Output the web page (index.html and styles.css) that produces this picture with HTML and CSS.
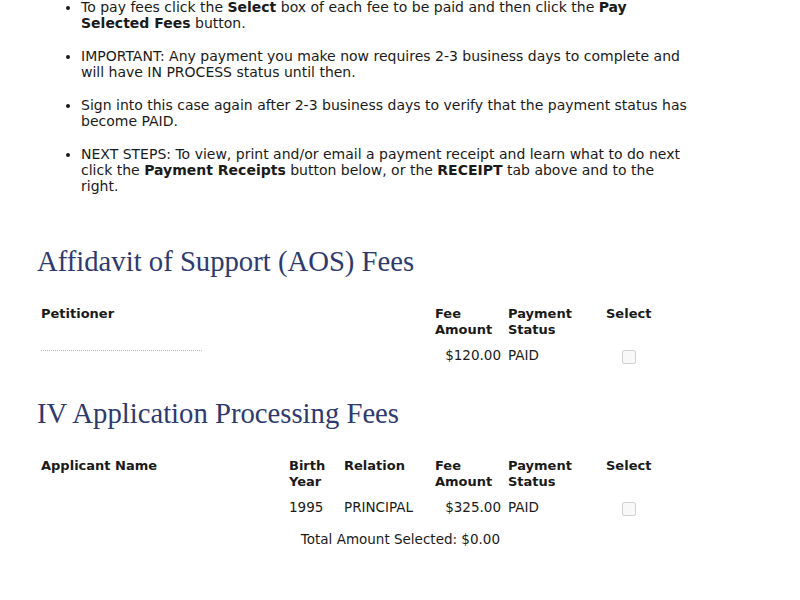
FILE: index.html
```
<!DOCTYPE html>
<html lang="en">
<head>
    <meta charset="UTF-8">
    <title>Fees</title>
    <link rel="stylesheet" href="styles.css">
</head>
<body>
<div class="page">
    <ul class="notes">
        <li>To pay fees click the <b>Select</b> box of each fee to be paid and then click the <b>Pay Selected Fees</b> button.</li>
        <li>IMPORTANT: Any payment you make now requires 2-3 business days to complete and will have IN PROCESS status until then.</li>
        <li>Sign into this case again after 2-3 business days to verify that the payment status has become PAID.</li>
        <li>NEXT STEPS: To view, print and/or email a payment receipt and learn what to do next click the <b>Payment Receipts</b> button below, or the <b>RECEIPT</b> tab above and to the right.</li>
    </ul>

    <h2 class="fee-title first">Affidavit of Support (AOS) Fees</h2>
    <table class="fees">
        <colgroup>
            <col style="width:394px">
            <col style="width:73px">
            <col style="width:98px">
            <col style="width:54px">
        </colgroup>
        <tr>
            <th>Petitioner</th>
            <th>Fee Amount</th>
            <th>Payment Status</th>
            <th>Select</th>
        </tr>
        <tr>
            <td><span class="hidden-name"></span></td>
            <td class="amount">$120.00</td>
            <td>PAID</td>
            <td class="check"><input type="checkbox" disabled></td>
        </tr>
    </table>

    <h2 class="fee-title">IV Application Processing Fees</h2>
    <table class="fees">
        <colgroup>
            <col style="width:248px">
            <col style="width:55px">
            <col style="width:91px">
            <col style="width:73px">
            <col style="width:98px">
            <col style="width:54px">
        </colgroup>
        <tr>
            <th>Applicant Name</th>
            <th>Birth Year</th>
            <th>Relation</th>
            <th>Fee Amount</th>
            <th>Payment Status</th>
            <th>Select</th>
        </tr>
        <tr>
            <td></td>
            <td>1995</td>
            <td>PRINCIPAL</td>
            <td class="amount">$325.00</td>
            <td>PAID</td>
            <td class="check"><input type="checkbox" disabled></td>
        </tr>
        <tr>
            <td colspan="4" class="total">Total Amount Selected: $0.00</td>
            <td colspan="2"></td>
        </tr>
    </table>
</div>
</body>
</html>
```
FILE: styles.css
```
body {
    margin: 0;
    background: #fff;
    font-family: "DejaVu Sans", Verdana, sans-serif;
    font-size: 14px;
    line-height: 16px;
    color: #1a1a1a;
}
.page {
    padding-left: 37px;
    width: 650px;
}
.notes {
    margin: -1px 0 0 0;
    padding-left: 44px;
}
.notes li {
    margin-bottom: 17px;
}
.fee-title {
    font-family: "Liberation Serif", "Times New Roman", serif;
    font-weight: normal;
    font-size: 28.7px;
    line-height: 32px;
    color: #2e3a6e;
    margin: 0 0 25px 0;
}
.fee-title.first {
    margin-top: 51px;
}
.fees {
    border-collapse: collapse;
    table-layout: fixed;
    width: 619px;
    margin-bottom: 26px;
}
.fees th {
    text-align: left;
    vertical-align: top;
    padding: 4px 4px 5px 4px;
    font-size: 13px;
    font-weight: bold;
}
.fees td {
    padding: 4px;
    vertical-align: top;
    font-size: 13.5px;
}
.fees .amount {
    text-align: right;
    padding-right: 3px;
}
.fees .check {
    text-align: center;
}
.check input {
    margin: 3px 0 0 0;
    width: 14px;
    height: 14px;
}
.hidden-name {
    display: block;
    width: 161px;
    margin-top: 3px;
    border-top: 1px dotted #b8bdc2;
}
.fees .total {
    text-align: right;
    padding-top: 8px;
}
```
